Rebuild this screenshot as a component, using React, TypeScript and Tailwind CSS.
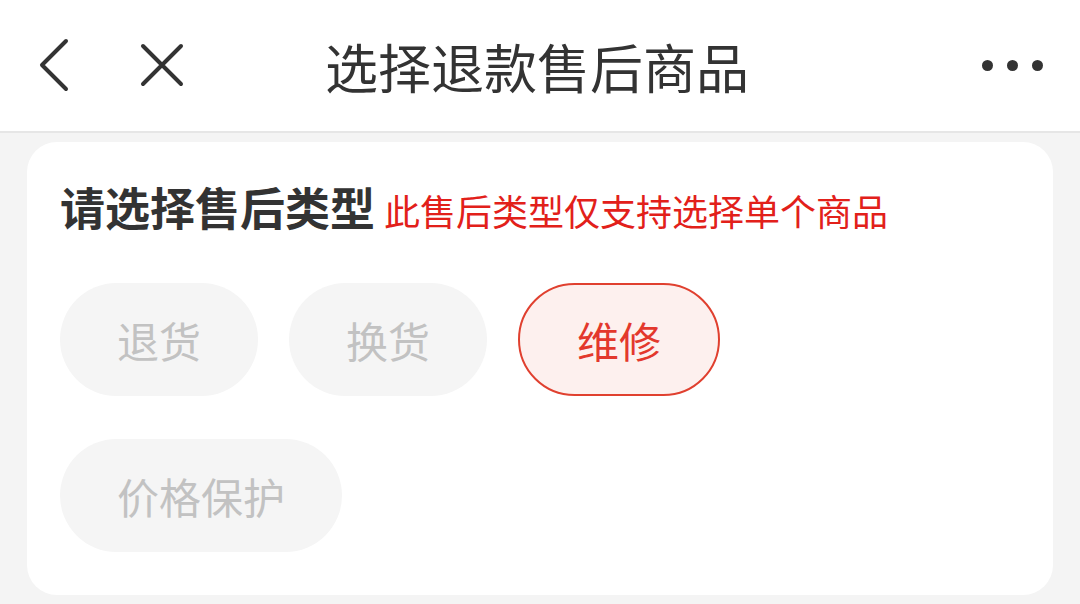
import React from "react";

const types = [
  { label: "退货", disabled: true },
  { label: "换货", disabled: true },
  { label: "维修", selected: true },
  { label: "价格保护", disabled: true },
];

const App = () => {
  return (
    <div
      className="w-[1080px] h-[604px] bg-[#f4f4f4] overflow-hidden"
      style={{ fontFamily: '"Noto Sans CJK SC", "Noto Sans", sans-serif' }}
    >
      {/* Header */}
      <div className="relative h-[133px] bg-white border-b-2 border-[#e6e6e6] flex items-center justify-center">
        <div className="absolute left-[36px] top-[38px] flex items-center gap-[66px]">
          <svg width="36" height="54" viewBox="0 0 36 54" fill="none">
            <path d="M30 3 L6 27 L30 51" stroke="#333" strokeWidth="4" strokeLinecap="round" strokeLinejoin="round" />
          </svg>
          <svg width="48" height="48" viewBox="0 0 48 48" fill="none">
            <path d="M5 5 L43 43 M43 5 L5 43" stroke="#333" strokeWidth="4" strokeLinecap="round" />
          </svg>
        </div>
        <h1 className="text-[53px] leading-none text-[#333] ml-[-6px] mt-[2px]">选择退款售后商品</h1>
        <div className="absolute right-[37px] top-[60px] flex gap-[14px]">
          <span className="w-[11px] h-[11px] rounded-full bg-[#333]" />
          <span className="w-[11px] h-[11px] rounded-full bg-[#333]" />
          <span className="w-[11px] h-[11px] rounded-full bg-[#333]" />
        </div>
      </div>

      {/* Card */}
      <div className="mx-[27px] mt-[9px] h-[453px] bg-white rounded-[30px] px-[33px] pt-[42px]">
        <div className="flex items-baseline gap-[9px]">
          <h2 className="text-[45px] font-bold text-[#333] leading-none">请选择售后类型</h2>
          <span className="text-[36px] text-[#e2201a] leading-none">此售后类型仅支持选择单个商品</span>
        </div>
        <div className="mt-[54px] flex flex-wrap gap-x-[31px] gap-y-[43px] w-[720px]">
          {types.map((t) => (
            <div
              key={t.label}
              className={
                t.selected
                  ? "h-[113px] px-[57px] rounded-full flex items-center justify-center text-[42px] bg-[#fdf0ee] border-2 border-[#e0402f] text-[#e3382c]"
                  : "h-[113px] px-[57px] rounded-full flex items-center justify-center text-[42px] bg-[#f5f5f5] text-[#c2c2c2]"
              }
            >
              {t.label}
            </div>
          ))}
        </div>
      </div>
    </div>
  );
};

export default App;
